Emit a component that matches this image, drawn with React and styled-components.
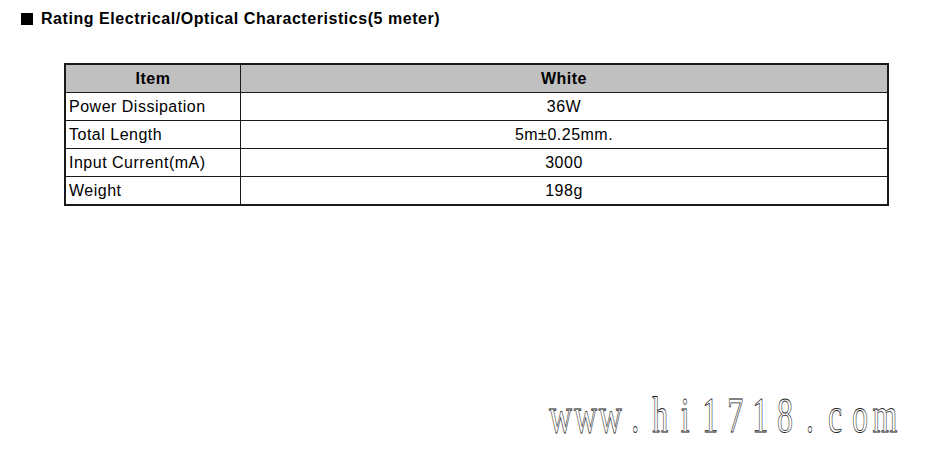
import React from "react";
import styled, { createGlobalStyle } from "styled-components";

const GlobalStyle = createGlobalStyle`
  html, body {
    margin: 0;
    padding: 0;
    background: #ffffff;
  }
  body {
    font-family: "Liberation Sans", Arial, sans-serif;
    color: #000;
  }
`;

const rows = [
  { item: "Power Dissipation", value: "36W" },
  { item: "Total Length", value: "5m±0.25mm." },
  { item: "Input Current(mA)", value: "3000" },
  { item: "Weight", value: "198g" },
];

const App = () => {
  return (
    <Page>
      <GlobalStyle />
      <Heading>
        <Bullet />
        Rating Electrical/Optical Characteristics(5 meter)
      </Heading>
      <SpecTable>
        <thead>
          <tr>
            <HeadCell $first>Item</HeadCell>
            <HeadCell>White</HeadCell>
          </tr>
        </thead>
        <tbody>
          {rows.map((row) => (
            <tr key={row.item}>
              <Cell $first>{row.item}</Cell>
              <Cell $center>{row.value}</Cell>
            </tr>
          ))}
        </tbody>
      </SpecTable>
      <Watermark>
        {"www.hi1718.com".split("").map((ch, i) => (
          <Glyph key={i}>{ch}</Glyph>
        ))}
      </Watermark>
    </Page>
  );
};

export default App;

const Page = styled.div`
  position: relative;
  width: 925px;
  height: 450px;
  box-sizing: border-box;
  padding: 9px 0 0 21px;
  overflow: hidden;
`;

const Heading = styled.h2`
  margin: 0;
  display: flex;
  align-items: center;
  gap: 8px;
  font-size: 16px;
  font-weight: bold;
  line-height: 19px;
  letter-spacing: 0.55px;
`;

const Bullet = styled.span`
  display: inline-block;
  width: 12px;
  height: 12px;
  background: #000;
`;

const SpecTable = styled.table`
  margin: 35px 0 0 43px;
  width: 825px;
  border-collapse: collapse;
  border: 2px solid #1a1a1a;
  font-size: 16px;
  letter-spacing: 0.5px;
`;

const HeadCell = styled.th`
  height: 27px;
  padding: 0;
  background: #c0c0c0;
  font-weight: bold;
  text-align: center;
  border-left: ${(p) => (p.$first ? "none" : "1.5px solid #1a1a1a")};
  border-bottom: 1.5px solid #1a1a1a;
  width: ${(p) => (p.$first ? "174px" : "auto")};
`;

const Cell = styled.td`
  height: 27px;
  padding: 0 0 0 ${(p) => (p.$center ? "0" : "3px")};
  text-align: ${(p) => (p.$center ? "center" : "left")};
  border-left: ${(p) => (p.$first ? "none" : "1.5px solid #1a1a1a")};
  border-top: 1.5px solid #1a1a1a;
`;

const Watermark = styled.div`
  position: absolute;
  left: 548px;
  top: 390px;
  display: flex;
  transform: scaleX(0.64);
  transform-origin: left top;
  font-family: "Liberation Serif", "Times New Roman", serif;
  font-size: 50px;
  line-height: 50px;
  color: #ffffff;
  -webkit-text-stroke: 0.8px #222;
  white-space: nowrap;
`;

const Glyph = styled.span`
  display: block;
  width: 39px;
  text-align: center;
`;
